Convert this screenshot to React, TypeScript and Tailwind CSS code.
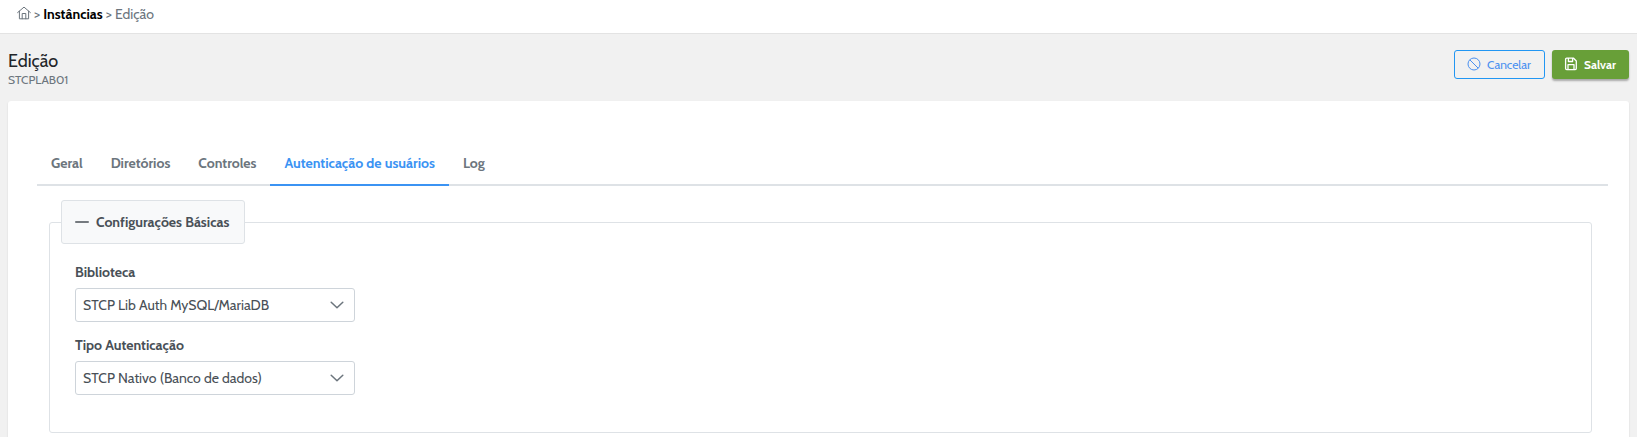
import type { ReactNode } from 'react';

const tabs = ['Geral', 'Diretórios', 'Controles', 'Autenticação de usuários', 'Log'];

function HomeIcon() {
  return (
    <svg className="mb-[2px]" width="14" height="14" viewBox="0 0 14 14" fill="none" stroke="#6c757d" strokeWidth="1" strokeLinecap="round" strokeLinejoin="round">
      <path d="M.6 6.6 7 1.1l6.4 5.5M2.4 5.2v7.6h9.2V5.2M5.2 12.8V7.5h3.6v5.3" />
    </svg>
  );
}

function BanIcon() {
  return (
    <svg className="mb-[2px]" width="14" height="14" viewBox="0 0 14 14" fill="none" stroke="currentColor" strokeWidth="1">
      <circle cx="7" cy="7" r="6" />
      <path d="m2.8 2.8 8.4 8.4" />
    </svg>
  );
}

function SaveIcon() {
  return (
    <svg className="mb-[2px]" width="14" height="14" viewBox="0 0 14 14" fill="none" stroke="currentColor" strokeWidth="1.3" strokeLinejoin="round">
      <path d="M2.7 1.2h6.9l2.7 2.8v7.5a1.1 1.1 0 0 1-1.1 1.1H2.7a1.1 1.1 0 0 1-1.1-1.1V2.3a1.1 1.1 0 0 1 1.1-1.1ZM4.4 1.4v3.1h4.2V1.4M4 12.4V7.7h6v4.7" />
    </svg>
  );
}

function Chevron() {
  return (
    <svg width="14" height="14" viewBox="0 0 14 14" fill="none" stroke="#6c757d" strokeWidth="1.5" strokeLinecap="round" strokeLinejoin="round">
      <path d="m1.2 4.2 5.8 5.6 5.8-5.6" />
    </svg>
  );
}

function Field({ label, children }: { label: string; children: ReactNode }) {
  return (
    <div className="mb-3">
      <div className="mb-[5px] h-[22px] pt-px text-sm leading-[21px] font-bold text-[#495057]">{label}</div>
      <button className="flex h-[34px] w-[280px] items-center justify-between rounded-[3px] border border-[#ced4da] bg-white pr-[10px] pl-[7px] text-left text-sm text-[#495057]">
        <span>{children}</span>
        <Chevron />
      </button>
    </div>
  );
}

export default function App() {
  return (
    <div className="h-[437px] overflow-hidden bg-[#f1f1f1] font-['Cabin','Carlito','Lato',sans-serif] text-sm text-[#495057]">
      <nav className="flex h-[34px] items-center border-b border-[#e3e3e3] bg-white pb-[5px] pl-[17px] text-[#6c757d]">
        <HomeIcon />
        <span className="whitespace-pre"> &gt; </span>
        <span className="font-bold text-black">Instâncias</span>
        <span className="whitespace-pre"> &gt; Edição</span>
      </nav>

      <header className="flex h-[67px] items-start justify-between px-2 pt-4">
        <div>
          <h1 className="text-lg leading-[22px] text-[#212529]">Edição</h1>
          <p className="text-xs leading-4 text-[#6c757d]">STCPLAB01</p>
        </div>
        <div className="flex gap-[7px] text-xs">
          <button className="flex h-[29px] w-[91px] items-center gap-[6px] rounded-[3px] border border-[#2196f3] pl-3 text-[#4a90f0]">
            <BanIcon />
            <span>Cancelar</span>
          </button>
          <button className="flex h-[29px] w-[77px] items-center gap-[6px] rounded-[3px] bg-[#689f38] pl-3 font-bold text-white shadow-[0_2px_2px_rgba(0,0,0,0.3)]">
            <SaveIcon />
            <span>Salvar</span>
          </button>
        </div>
      </header>

      <main className="mx-2 h-[400px] rounded-[3px] bg-white px-[29px] pt-[42px] shadow-[0_1px_2px_rgba(0,0,0,0.12)]">
        <div className="mr-[-8px] flex h-[43px] w-[1571px] border-b-2 border-[#dee2e6]">
          {tabs.map((t) => (
            <button
              key={t}
              className={
                t === 'Autenticação de usuários'
                  ? 'mb-[-2px] border-b-2 border-[#3b93f3] px-[14px] pb-[2px] font-bold text-[#3b93f3]'
                  : 'mb-[-2px] border-b-2 border-transparent px-[14px] pb-[2px] font-bold text-[#6c757d]'
              }
            >
              {t}
            </button>
          ))}
        </div>

        <fieldset className="mt-[14px] ml-3 h-[233px] w-[1543px] rounded-[3px] border border-[#dee2e6] px-[25px]">
          <legend className="ml-[-14px] flex h-[44px] w-[184px] items-center gap-[7px] rounded-[3px] border border-[#dee2e6] bg-[#f8f9fa] pl-[13px] font-bold text-[#495057]">
            <svg width="14" height="14" viewBox="0 0 14 14" stroke="currentColor" strokeWidth="1.3" strokeLinecap="round">
              <path d="M.7 7h12.6" />
            </svg>
            <span>Configurações Básicas</span>
          </legend>
          <div className="pt-[17px]">
            <Field label="Biblioteca">STCP Lib Auth MySQL/MariaDB</Field>
            <Field label="Tipo Autenticação">STCP Nativo (Banco de dados)</Field>
          </div>
        </fieldset>
      </main>
    </div>
  );
}
